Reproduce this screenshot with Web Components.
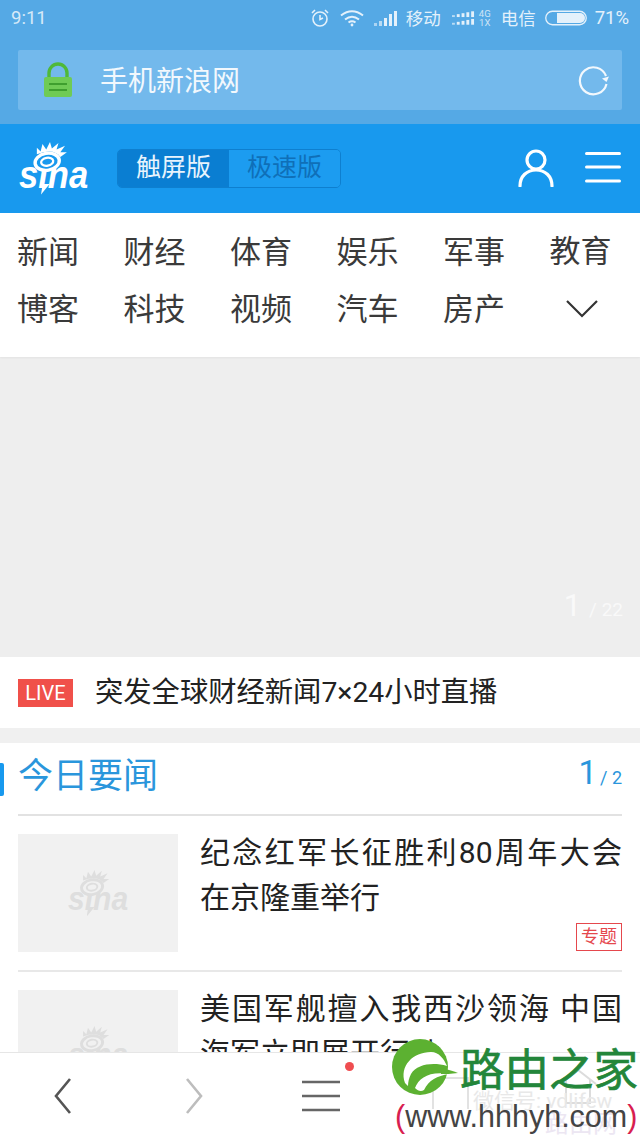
<!DOCTYPE html>
<html lang="zh">
<head>
<meta charset="utf-8">
<title>手机新浪网</title>
<style>
  html, body { margin: 0; padding: 0; background: #fff; }
  body { font-family: Roboto, "Noto Sans CJK SC", sans-serif; }
</style>
</head>
<body>
<sina-page>
  <browser-chrome title-text="手机新浪网"></browser-chrome>
  <site-header></site-header>
  <channel-nav></channel-nav>
  <hero-slider current="1" total="22"></hero-slider>
  <live-row>突发全球财经新闻7×24小时直播</live-row>
  <section-head current="1" total="2">今日要闻</section-head>
  <news-item tag="专题">纪念红军长征胜利80周年大会在京隆重举行</news-item>
  <news-item>美国军舰擅入我西沙领海 中国海军立即展开行动</news-item>
  <browser-toolbar slot="over"></browser-toolbar>
  <site-watermark slot="over"></site-watermark>
</sina-page>

<script>
const CJK = `Roboto, "Noto Sans CJK SC", sans-serif`;

class SinaPage extends HTMLElement {
  constructor() {
    super();
    this.attachShadow({ mode: 'open' }).innerHTML = `
      <style>
        :host { display: block; position: relative; width: 640px; height: 1138px; overflow: hidden; background: #fff; }
      </style>
      <slot></slot>
      <slot name="over"></slot>`;
  }
}

// the eye sits on top of the word and hides the dot of the i, so it is
// filled with the colour behind the logo (--logo-bg)
class SinaLogo extends HTMLElement {
  constructor() {
    super();
    this.attachShadow({ mode: 'open' }).innerHTML = `
      <style>
        :host { display: block; position: relative; width: 70px; height: 56px; color: currentColor; }
        svg { position: absolute; left: 12px; top: 2px; }
        .word {
          position: absolute; left: 0; top: 13px; transform: scaleX(.91); transform-origin: 0 0;
          font: italic 700 38px/44px "Liberation Sans", sans-serif; white-space: nowrap;
        }
        .tail { position: absolute; left: 22px; top: 44px; width: 9px; height: 11px; background: currentColor; clip-path: polygon(20% 0, 100% 0, 0 100%); }
      </style>
      <div class="word">sina</div>
      <div class="tail"></div>
      <svg viewBox="0 0 40 33" width="38" height="31" aria-hidden="true">
        <ellipse cx="17" cy="21" rx="13" ry="9" transform="rotate(-10 17 21)" fill="var(--logo-bg)" stroke="currentColor" stroke-width="3.600"/>
        <ellipse cx="17" cy="21" rx="6.500" ry="4.200" transform="rotate(-10 17 21)" fill="none" stroke="currentColor" stroke-width="2.400"/>
        <path fill="currentColor" d="M6 13 L6 6 L10 10 L12 2 L16 8 L20 0 L22 7 L29 1 L27 8 L36 4 L31 11 L38 11 L31 16 Q24 6 6 13Z"/>
      </svg>`;
  }
}

class BrowserChrome extends HTMLElement {
  constructor() {
    super();
    this.attachShadow({ mode: 'open' }).innerHTML = `
      <style>
        :host { display: block; height: 124px; box-sizing: border-box; background: #55a9e5; color: #e4f1fb; font-family: ${CJK}; }
        .status { height: 38px; display: flex; align-items: center; padding: 0 11px 2px 11px; box-sizing: border-box; }
        .time { flex: 1; font-size: 18.500px; color: #d6e9f8; }
        .status svg { display: block; }
        .carrier { font-size: 17.500px; margin-top: -2px; }
        .net { font-size: 9.500px; line-height: 9.500px; text-align: center; margin: 0 10px 0 4px; color: #cfe5f6; }
        .pct { font-size: 18.500px; margin-left: 8px; }
        .bar {
          margin: 12px 18px 0; height: 60px; border-radius: 2px; background: #73b9ec;
          display: flex; align-items: center; padding: 0 12px 0 25px;
        }
        .title { flex: 1; margin-left: 27px; margin-top: -3px; font-size: 28px; color: #f2f8fd; }
      </style>
      <div class="status">
        <span class="time">9:11</span>
        <svg width="20" height="20" viewBox="0 0 20 20" fill="none" stroke="#e4f1fb" stroke-width="1.600" style="margin-right:10px">
          <circle cx="10" cy="11" r="7"/><path d="M10 7v4.500l3-1.500M2 5l3-3M18 5l-3-3"/>
        </svg>
        <svg width="24" height="18" viewBox="0 0 24 18" fill="none" stroke="#e4f1fb" stroke-width="2" style="margin-right:10px">
          <path d="M1 6.500Q12 -2 23 6.500M5 10.500Q12 5 19 10.500M8.500 13.500Q12 11 15.500 13.500"/><circle cx="12" cy="16" r="1.400" fill="#e4f1fb" stroke="none"/>
        </svg>
        <svg width="23" height="16" viewBox="0 0 23 16" fill="#e4f1fb" style="margin-right:9px">
          <rect x="0" y="13" width="3" height="3" opacity=".6"/><rect x="5" y="11" width="3" height="5" opacity=".7"/><rect x="10" y="8" width="3" height="8"/><rect x="15" y="4" width="3" height="12"/><rect x="20" y="1" width="3" height="15"/>
        </svg>
        <span class="carrier">移动</span>
        <svg width="23" height="16" viewBox="0 0 24 16" fill="#e4f1fb" style="margin-left:11px">
          <g><rect x="0" y="5" width="3" height="2" opacity=".7"/><rect x="5" y="4" width="3" height="3"/><rect x="10" y="3" width="3" height="4"/><rect x="15" y="2" width="3" height="5"/><rect x="20" y="1" width="3" height="6"/></g>
          <g><rect x="0" y="13" width="3" height="2" opacity=".7"/><rect x="5" y="12" width="3" height="3"/><rect x="10" y="11" width="3" height="4"/><rect x="15" y="10" width="3" height="5"/><rect x="20" y="9" width="3" height="6"/></g>
        </svg>
        <span class="net">4G<br>1X</span>
        <span class="carrier">电信</span>
        <svg width="42" height="16" viewBox="0 0 42 16" style="margin-left:9px">
          <rect x=".75" y="1.250" width="40.500" height="13.500" rx="6.700" fill="none" stroke="#e4f1fb" stroke-width="1.300"/>
          <path d="M12 3h23a5 5 0 0 1 0 10H12Z" fill="#e4f1fb"/>
        </svg>
        <span class="pct">71%</span>
      </div>
      <div class="bar">
        <svg width="30" height="36" viewBox="0 0 30 36">
          <path d="M6 17V11a9 9 0 0 1 18 0v6" fill="none" stroke="#4fb93a" stroke-width="3.400"/>
          <rect x="1" y="15" width="28" height="20" rx="2" fill="#6fcb55"/>
          <path d="M6 22h18M6 28h18" stroke="#3f9f2e" stroke-width="2.200"/>
        </svg>
        <span class="title">${this.getAttribute('title-text') || ''}</span>
        <svg width="34" height="32" viewBox="0 0 34 32" fill="none" stroke="#f2f8fd" stroke-width="2.200">
          <path d="M30 12A13.500 13.500 0 1 0 30.500 20"/><path d="M26 14.500l4.500 3.500 2.500-5.500Z" fill="#f2f8fd" stroke="none"/>
        </svg>
      </div>`;
  }
}

class SiteHeader extends HTMLElement {
  constructor() {
    super();
    this.attachShadow({ mode: 'open' }).innerHTML = `
      <style>
        :host { display: flex; height: 89px; box-sizing: border-box; background: #1899ee; align-items: center; padding: 0 19px; font-family: ${CJK}; }
        sina-logo { color: #fff; --logo-bg: #1899ee; flex: none; margin-top: -2px; }
        .switch {
          display: flex; margin-left: 28px; height: 39px; width: 224px; box-sizing: border-box;
          border: 1px solid #0e7fcf; border-radius: 5px; overflow: hidden; font-size: 25px;
        }
        .switch span { display: flex; align-items: center; justify-content: center; height: 100%; box-sizing: border-box; padding-bottom: 7px; }
        .on { width: 111px; background: #0a7ed2; color: #e8f4fd; }
        .off { flex: 1; color: #0f6fb8; background: #1c9cf0; }
        .spacer { flex: 1; }
        .user { display: block; margin-right: 31px; margin-top: -2px; }
        .menu { display: block; margin-top: -3px; }
      </style>
      <sina-logo></sina-logo>
      <div class="switch"><span class="on">触屏版</span><span class="off">极速版</span></div>
      <div class="spacer"></div>
      <svg class="user" width="36" height="38" viewBox="0 0 36 38" fill="none" stroke="#fff" stroke-width="3.200" stroke-linecap="round">
        <circle cx="18" cy="11" r="9"/><path d="M2 37C2 27 9 21 18 21S34 27 34 37"/>
      </svg>
      <svg class="menu" width="36" height="32" viewBox="0 0 36 32" stroke="#fff" stroke-width="3" stroke-linecap="round">
        <path d="M1.500 2.500h33M1.500 16h33M1.500 30h33"/>
      </svg>`;
  }
}

class ChannelNav extends HTMLElement {
  constructor() {
    super();
    const names = ['新闻','财经','体育','娱乐','军事','教育','博客','科技','视频','汽车','房产'];
    this.attachShadow({ mode: 'open' }).innerHTML = `
      <style>
        :host {
          display: grid; height: 144px; box-sizing: border-box; padding: 11px 17px 0 17px; background: #fff;
          grid-template-columns: repeat(5, 106.500px) auto; grid-auto-rows: 57.500px;
          align-content: start;
          box-shadow: 0 1px 2px rgba(0,0,0,.05); position: relative;
          font: 31px/57px ${CJK}; color: #3a3a3a;
        }
        span:nth-child(n+7) { margin-top: -1px; }
        svg { display: block; margin: 18px 0 0 16px; }
      </style>
      ${names.map(n => `<span>${n}</span>`).join('')}
      <svg width="32" height="18" viewBox="0 0 32 18" fill="none" stroke="#333" stroke-width="2.200"><path d="M1 1l15 15L31 1"/></svg>`;
  }
}

class HeroSlider extends HTMLElement {
  constructor() {
    super();
    this.attachShadow({ mode: 'open' }).innerHTML = `
      <style>
        :host { display: flex; height: 300px; box-sizing: border-box; background: #eeeeee; align-items: flex-end; justify-content: flex-end; padding: 0 17px 34px 0; font-family: ${CJK}; color: #f9f9f9; }
        b { font-weight: 400; font-size: 31px; line-height: 34px; }
        span { font-size: 19px; line-height: 26px; margin-left: 8px; }
      </style>
      <b>${this.getAttribute('current')}</b><span>/ ${this.getAttribute('total')}</span>`;
  }
}

class LiveRow extends HTMLElement {
  constructor() {
    super();
    this.attachShadow({ mode: 'open' }).innerHTML = `
      <style>
        :host { display: flex; height: 71px; align-items: center; padding: 0 18px; background: #fff; font: 28.300px ${CJK}; color: #222; border-bottom: 15px solid #f0f0f0; }
        .tag { width: 55px; height: 28px; background: #f0504a; color: #fff; font-size: 20px; line-height: 28px; text-align: center; margin-right: 22px; flex: none; }
        .text { margin-top: -7px; }
      </style>
      <span class="tag">LIVE</span><span class="text"><slot></slot></span>`;
  }
}

class SectionHead extends HTMLElement {
  constructor() {
    super();
    this.attachShadow({ mode: 'open' }).innerHTML = `
      <style>
        :host {
          display: flex; height: 73px; box-sizing: border-box; margin: 0 18px; padding-bottom: 12px; position: relative; align-items: center;
          justify-content: space-between; border-bottom: 2px solid #e2e2e2; font-family: ${CJK}; color: #2a96dc;
        }
        :host::before { content: ""; position: absolute; left: -18px; top: 20px; width: 4px; height: 33px; background: #1899ee; border-radius: 0 2px 2px 0; }
        .name { font-size: 35px; }
        .pager b { font-weight: 400; font-size: 33px; }
        .pager span { font-size: 18px; margin-left: 3px; }
      </style>
      <span class="name"><slot></slot></span>
      <span class="pager"><b>${this.getAttribute('current')}</b><span>/ ${this.getAttribute('total')}</span></span>`;
  }
}

class NewsItem extends HTMLElement {
  constructor() {
    super();
    const tag = this.getAttribute('tag');
    this.attachShadow({ mode: 'open' }).innerHTML = `
      <style>
        :host {
          display: flex; height: 156px; box-sizing: border-box; margin: 0 18px; padding-top: 18px; gap: 22px;
          border-bottom: 2px solid #e8e8e8; font-family: ${CJK};
        }
        .thumb { width: 160px; height: 118px; background: #f1f1f1; flex: none; display: flex; align-items: center; justify-content: center; }
        sina-logo { zoom: .87; color: #dedede; --logo-bg: #f1f1f1; }
        .text { flex: 1; position: relative; }
        .title { font-size: 30px; line-height: 45px; color: #222; margin-top: -4px; text-align: justify; }
        .tag {
          position: absolute; right: 0; top: 89px; width: 46px; height: 28px; box-sizing: border-box; border: 1px solid #e5484d;
          color: #e5484d; font-size: 18px; line-height: 26px; text-align: center;
        }
      </style>
      <div class="thumb"><sina-logo></sina-logo></div>
      <div class="text">
        <div class="title"><slot></slot></div>
        ${tag ? `<span class="tag">${tag}</span>` : ''}
      </div>`;
  }
}

class BrowserToolbar extends HTMLElement {
  constructor() {
    super();
    this.attachShadow({ mode: 'open' }).innerHTML = `
      <style>
        :host {
          display: flex; position: absolute; left: 0; right: 0; bottom: 0; height: 86px; box-sizing: border-box;
          background: #fff; border-top: 1px solid #e6e6e6; align-items: center;
        }
        .dot { position: absolute; width: 9px; height: 9px; border-radius: 50%; background: #ef4d50; left: 345px; top: 9px; }
      </style>
      <svg style="margin-left:54px" width="18" height="36" viewBox="0 0 18 36" fill="none" stroke="#555" stroke-width="2.600"><path d="M16 1L2 18l14 17"/></svg>
      <svg style="margin-left:113px" width="18" height="36" viewBox="0 0 18 36" fill="none" stroke="#bdbdbd" stroke-width="2.600"><path d="M2 1l14 17L2 35"/></svg>
      <svg style="margin-left:99px" width="38" height="32" viewBox="0 0 38 32" stroke="#666" stroke-width="2.600"><path d="M0 2h38M0 16h38M0 30h38"/></svg>
      <span class="dot"></span>`;
  }
}

class SiteWatermark extends HTMLElement {
  constructor() {
    super();
    this.attachShadow({ mode: 'open' }).innerHTML = `
      <style>
        :host { display: block; position: absolute; left: 390px; top: 1036px; width: 250px; height: 102px; font-family: ${CJK}; }
        svg { position: absolute; }
        .name {
          position: absolute; left: 70px; top: 3px; font: 400 44.500px/56px "Noto Sans CJK SC", sans-serif; color: #23863a;
          -webkit-text-stroke: .7px #23863a; white-space: nowrap;
        }
        .ghost { position: absolute; left: 83px; top: 52px; color: #e8e8e8; font-size: 21px; line-height: 26px; white-space: nowrap; }
        .ghost2 { position: absolute; left: 155px; top: 76px; color: #ece6f2; font-size: 24px; line-height: 24px; white-space: nowrap; }
        .url { position: absolute; left: 5px; top: 60px; font: 30.500px/40px "Liberation Sans", sans-serif; color: #444; white-space: nowrap; }
        .url i { font-style: normal; color: #d81e50; }
      </style>
      <svg style="left:42px;top:41px" width="37" height="33" viewBox="0 0 37 33" fill="none" stroke="#e2e2e2" stroke-width="2"><path d="M1 32V1h35v31"/></svg>
      <svg style="left:168px;top:32px" width="40" height="36" viewBox="0 0 40 36" fill="none" stroke="#dcdcdc" stroke-width="2"><path d="M2 16L20 2l18 14M8 12v23h24V12"/></svg>
      <span class="ghost">微信号: vdlifew</span>
      <span class="ghost2">路由网</span>
      <svg style="left:1px;top:2px" width="68" height="58" viewBox="0 0 68 58">
        <circle cx="29" cy="29" r="28" fill="#5cb131"/>
        <path fill="#fff" d="M14 45C8 28 22 14 40 14C48 14 53 21 56 28C42 24 26 26 20 36C18 40 17 44 17 48Z"/>
        <path fill="#fff" d="M24 50C28 40 38 33 58 36C46 38 38 42 33 52C30 54 27 53 24 50Z"/>
        <path fill="#5cb131" d="M50 30C56 31 62 33 67 35C60 36 54 36 50 36Z"/>
      </svg>
      <span class="name">路由之家</span>
      <span class="url"><i>(</i>www.hhhyh.com<i>)</i></span>`;
  }
}

customElements.define('sina-page', SinaPage);
customElements.define('sina-logo', SinaLogo);
customElements.define('browser-chrome', BrowserChrome);
customElements.define('site-header', SiteHeader);
customElements.define('channel-nav', ChannelNav);
customElements.define('hero-slider', HeroSlider);
customElements.define('live-row', LiveRow);
customElements.define('section-head', SectionHead);
customElements.define('news-item', NewsItem);
customElements.define('browser-toolbar', BrowserToolbar);
customElements.define('site-watermark', SiteWatermark);
</script>
</body>
</html>
